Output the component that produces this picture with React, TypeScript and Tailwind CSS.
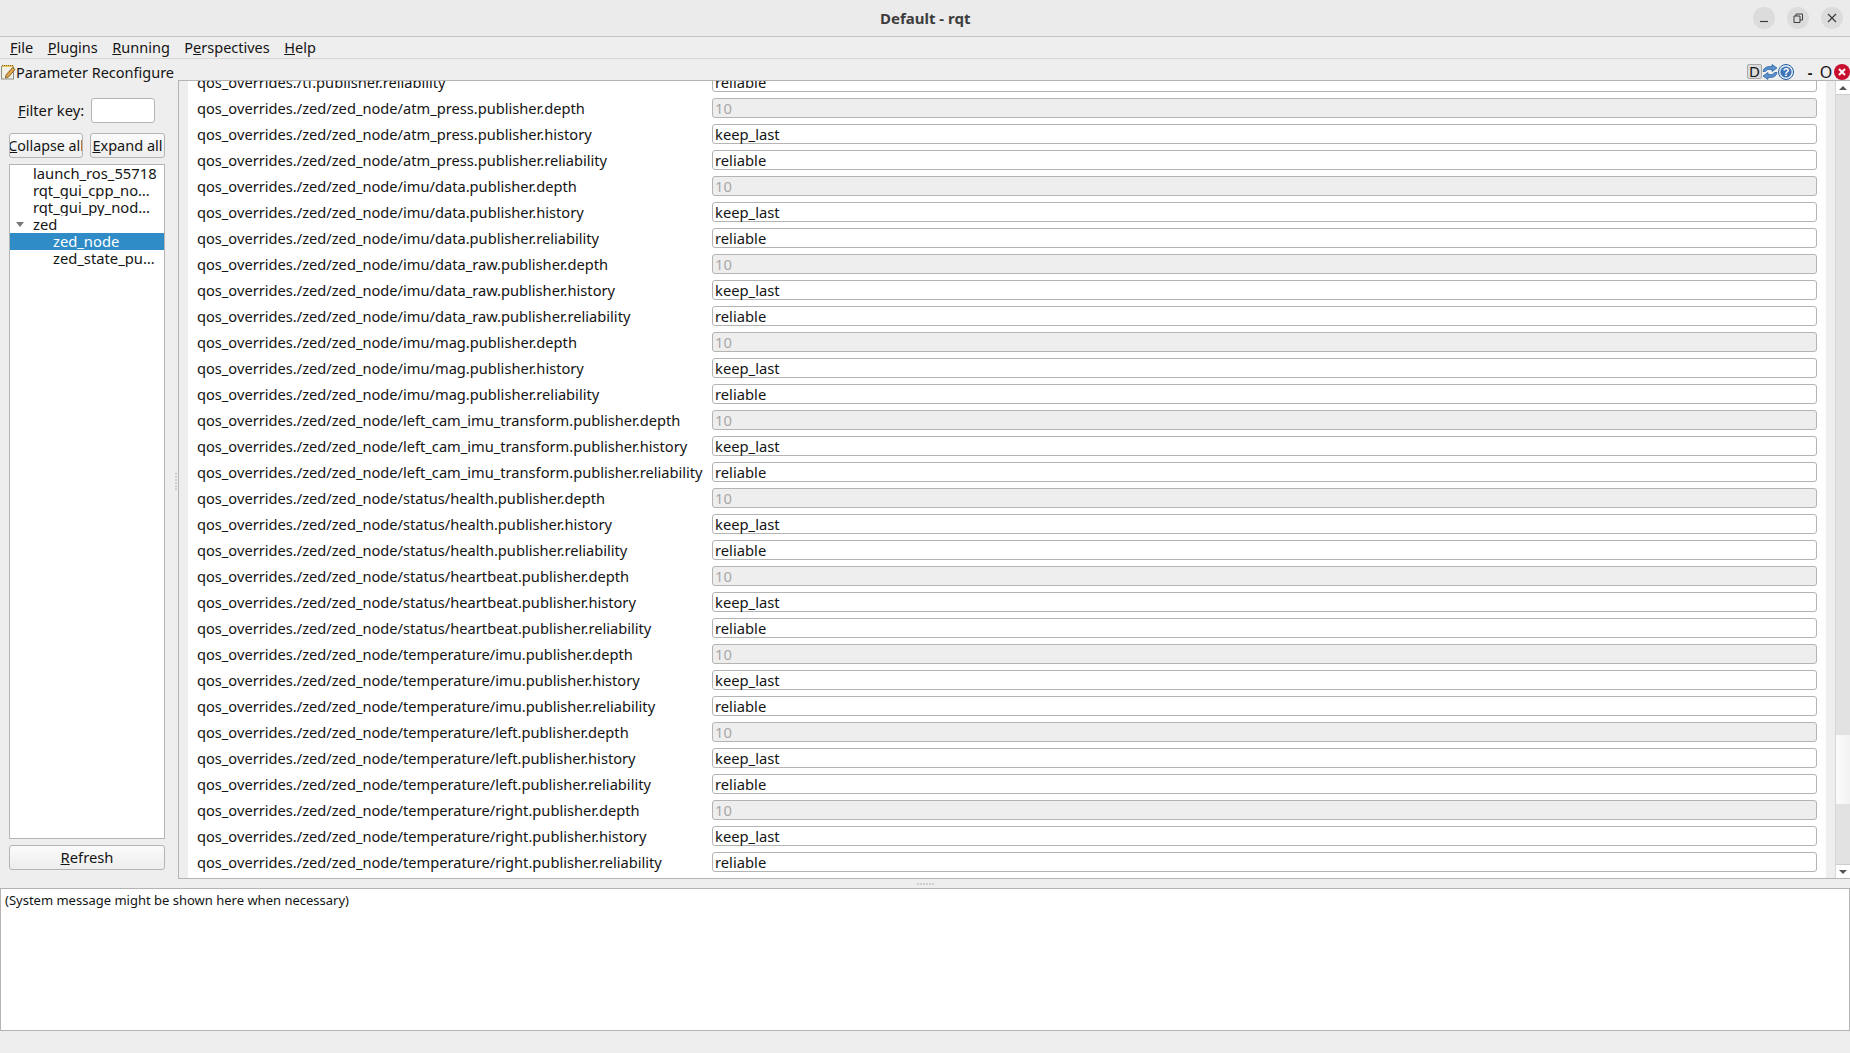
const font = { fontFamily: '"Noto Sans", sans-serif' };

const PREFIJO = "qos_overrides./zed/zed_node/";
const TEMAS = [
  "atm_press",
  "imu/data",
  "imu/data_raw",
  "imu/mag",
  "left_cam_imu_transform",
  "status/health",
  "status/heartbeat",
  "temperature/imu",
  "temperature/left",
  "temperature/right",
];
const PUNTOS = [0, 1, 2, 3, 4, 5];

function armarFilas() {
  const filas: { label: string; tipo: string }[] = [];
  for (const t of TEMAS) {
    filas.push({ label: `${PREFIJO}${t}.publisher.depth`, tipo: "depth" });
    filas.push({ label: `${PREFIJO}${t}.publisher.history`, tipo: "history" });
    filas.push({ label: `${PREFIJO}${t}.publisher.reliability`, tipo: "reliability" });
  }
  return filas;
}

function Fila({ label, tipo }: { label: string; tipo: string }) {
  const disabled = tipo === "depth";
  const valor = tipo === "depth" ? "10" : tipo === "history" ? "keep_last" : "reliable";
  return (
    <div className="flex h-[26px] items-start">
      <div className="w-[515px] shrink-0 whitespace-nowrap text-[14.65px] leading-[20px] text-[#141414]">{label}</div>
      <div
        className={`h-[20px] w-[1105px] rounded-[3px] border border-[#b4b4b4] pl-[2px] text-[14.75px] leading-[18px] ${
          disabled ? "bg-[#eeeeee] text-[#a8a8a8]" : "bg-white text-[#141414]"
        }`}
      >
        {valor}
      </div>
    </div>
  );
}

function Boton({ children, className }: { children: React.ReactNode; className: string }) {
  return (
    <div
      className={`flex items-center justify-center rounded-[3px] border border-[#b4b4b4] bg-gradient-to-b from-[#fbfbfb] to-[#ededed] text-[#141414] ${className}`}
    >
      {children}
    </div>
  );
}

function IconoBloc() {
  return (
    <svg width="15" height="16" viewBox="0 0 15 16" className="shrink-0">
      <rect x="0.500" y="2.500" width="12" height="12.500" fill="#f2efe4" stroke="#8d8d85" />
      <rect x="1" y="1" width="11.500" height="2" fill="#e6c65a" />
      <path d="M1 1.500h11.500" stroke="#86691f" strokeDasharray="1 1" />
      <path d="M5 11l6.500-7.500 2.500 2-6.500 7.500-3 1z" fill="#e2a548" stroke="#6f5220" strokeWidth="0.800" />
    </svg>
  );
}

function IconoRefrescar() {
  return (
    <svg width="16" height="16" viewBox="0 0 16 16" className="shrink-0">
      <path d="M1 7.500C1.500 4 4.500 2.500 7.500 2.500H10V.5l5 3.500-5 3.500V5.500H7.500C5.500 5.500 4 6 3.500 7.500z" fill="#5b90cc" stroke="#1f5c9f" strokeWidth="0.700" />
      <path d="M15 8.500C14.500 12 11.500 13.500 8.500 13.500H6v2L1 12l5-3.500v2h2.500c2 0 3.500-.5 4-2z" fill="#5b90cc" stroke="#1f5c9f" strokeWidth="0.700" />
    </svg>
  );
}

function IconoAyuda() {
  return (
    <svg width="16" height="16" viewBox="0 0 16 16" className="shrink-0">
      <circle cx="8" cy="8" r="7.500" fill="#e6eef7" stroke="#1f5c9f" />
      <circle cx="8" cy="8" r="5.600" fill="#3d74b6" />
      <text x="8" y="12" textAnchor="middle" fontSize="11" fontWeight="700" fill="#fff" fontFamily="Liberation Sans">?</text>
    </svg>
  );
}

function IconoCerrarRojo() {
  return (
    <svg width="16" height="16" viewBox="0 0 16 16" className="shrink-0">
      <circle cx="8" cy="8" r="8" fill="#c8102e" />
      <path d="M5 5l6 6M11 5l-6 6" stroke="#fff" strokeWidth="2" />
    </svg>
  );
}

export default function App() {
  const filas = armarFilas();
  return (
    <div className="flex h-screen w-full flex-col overflow-hidden bg-[#eeeeee]" style={font}>
      {/* barra de titulo */}
      <div className="flex h-[37px] shrink-0 items-center border-b border-[#c4c4c4] bg-[#ebebeb] pl-[880px] pr-[7px]">
        <div className="flex-1 text-[15px] font-bold text-[#3d3d3d]">Default - rqt</div>
        <div className="flex items-center gap-[12px]">
          <div className="flex h-[22px] w-[22px] items-center justify-center rounded-full bg-[#dcdcdc]">
            <svg width="10" height="10" viewBox="0 0 10 10"><path d="M1 8.500h8" stroke="#3d3d3d" strokeWidth="1.200" /></svg>
          </div>
          <div className="flex h-[22px] w-[22px] items-center justify-center rounded-full bg-[#dcdcdc]">
            <svg width="10" height="10" viewBox="0 0 10 10"><path d="M1 3h6v6.500H1zM3 3V1h6.500v6H7" fill="none" stroke="#3d3d3d" strokeWidth="1" /></svg>
          </div>
          <div className="flex h-[22px] w-[22px] items-center justify-center rounded-full bg-[#dcdcdc]">
            <svg width="10" height="10" viewBox="0 0 10 10"><path d="M1 1l8 8M9 1l-8 8" stroke="#3d3d3d" strokeWidth="1.200" /></svg>
          </div>
        </div>
      </div>

      {/* menu */}
      <div className="flex h-[22px] shrink-0 items-center gap-[14.5px] border-b border-[#d6d6d6] pl-[10px] text-[14.5px] text-[#141414]">
        <span><u>F</u>ile</span>
        <span><u>P</u>lugins</span>
        <span><u>R</u>unning</span>
        <span>P<u>e</u>rspectives</span>
        <span><u>H</u>elp</span>
      </div>

      {/* encabezado del plugin */}
      <div className="flex h-[21px] shrink-0 items-start pl-[1px] pt-[5px] text-[14.5px] leading-[16px] text-[#141414]">
        <IconoBloc />
        <span className="flex-1">Parameter Reconfigure</span>
        <div className="flex h-[15px] w-[15px] items-center justify-center rounded-[2px] border border-[#a8a8a8] bg-[#dcdcdc] text-[15px] leading-none">D</div>
        <IconoRefrescar />
        <IconoAyuda />
        <span className="ml-[8px] w-[16px] text-center font-bold">-</span>
        <span className="w-[16px] text-center text-[16px]">O</span>
        <IconoCerrarRojo />
      </div>

      {/* cuerpo */}
      <div className="flex min-h-0 flex-1">
        <div className="relative flex w-[178px] shrink-0 flex-col pb-[9px] pl-[9px] pr-[13px] text-[14.75px] text-[#141414]">
          <div className="mt-[18px] flex h-[25px] items-center">
            <span className="ml-[9px] w-[73px]"><u>F</u>ilter key:</span>
            <div className="h-[25px] w-[64px] rounded-[3px] border border-[#b4b4b4] bg-white" />
          </div>
          <div className="mt-[10px] flex justify-between">
            <Boton className="h-[25px] w-[74px] overflow-hidden whitespace-nowrap text-[14.25px]"><u>C</u>ollapse all</Boton>
            <Boton className="h-[25px] w-[75px] whitespace-nowrap text-[14.5px]"><u>E</u>xpand all</Boton>
          </div>
          <div className="mt-[6px] min-h-0 flex-1 border border-[#b4b4b4] bg-white leading-[17px]">
            <div className="h-[17px] truncate pl-[23px]">launch_ros_55718</div>
            <div className="h-[17px] truncate pl-[23px] pr-[8px]">rqt_gui_cpp_node_55718</div>
            <div className="h-[17px] truncate pl-[23px] pr-[8px]">rqt_gui_py_node_55718</div>
            <div className="relative h-[17px] pl-[23px]">
              <span className="absolute left-[6px] top-[6px] h-0 w-0 border-x-[4px] border-t-[5px] border-x-transparent border-t-[#777777]" />
              zed
            </div>
            <div className="h-[17px] bg-[#308cc6] pl-[43px] text-white">zed_node</div>
            <div className="h-[17px] truncate pl-[43px] pr-[4px]">zed_state_publisher</div>
          </div>
          <Boton className="mt-[6px] h-[25px] w-full"><span><u>R</u>efresh</span></Boton>
          {/* asa del separador */}
          <div className="absolute right-[1px] top-[393px] flex flex-col gap-[1px]">
            {PUNTOS.map((p) => <span key={p} className="h-[2px] w-[2px] bg-[#cfcfcf]" />)}
          </div>
        </div>

        <div className="flex min-w-0 flex-1 border-y border-l border-[#b4b4b4]">
          <div className="min-w-0 flex-1 px-[9px]">
            <div className="h-full overflow-hidden bg-white pl-[9px]">
              <div className="-mt-[9px]">
                <Fila label="qos_overrides./tf.publisher.reliability" tipo="reliability" />
                {filas.map((f) => (
                  <Fila key={f.label} label={f.label} tipo={f.tipo} />
                ))}
              </div>
            </div>
          </div>
          <div className="flex w-[15px] shrink-0 flex-col border-l border-[#d6d6d6] bg-[#e2e2e2]">
            <div className="flex h-[14px] items-center justify-center border-b border-[#cccccc] bg-white">
              <span className="h-0 w-0 border-x-[4px] border-b-[4px] border-x-transparent border-b-[#555555]" />
            </div>
            <div className="flex-1" />
            <div className="h-[69px] bg-gradient-to-r from-[#fcfcfc] to-[#f2f2f2]" />
            <div className="h-[60px]" />
            <div className="flex h-[14px] items-center justify-center border-t border-[#cccccc] bg-white">
              <span className="h-0 w-0 border-x-[4px] border-t-[4px] border-x-transparent border-t-[#555555]" />
            </div>
          </div>
        </div>
      </div>

      {/* asa del separador inferior */}
      <div className="flex h-[9px] shrink-0 items-center justify-center gap-[1px]">
        {PUNTOS.map((p) => <span key={p} className="h-[2px] w-[2px] bg-[#cfcfcf]" />)}
      </div>

      {/* mensajes */}
      <div className="h-[143px] shrink-0 border border-[#b4b4b4] bg-white pl-[4px] pt-[1px] text-[13px] leading-[20px] text-[#141414]">
        (System message might be shown here when necessary)
      </div>
      <div className="h-[22px] shrink-0" />
    </div>
  );
}
